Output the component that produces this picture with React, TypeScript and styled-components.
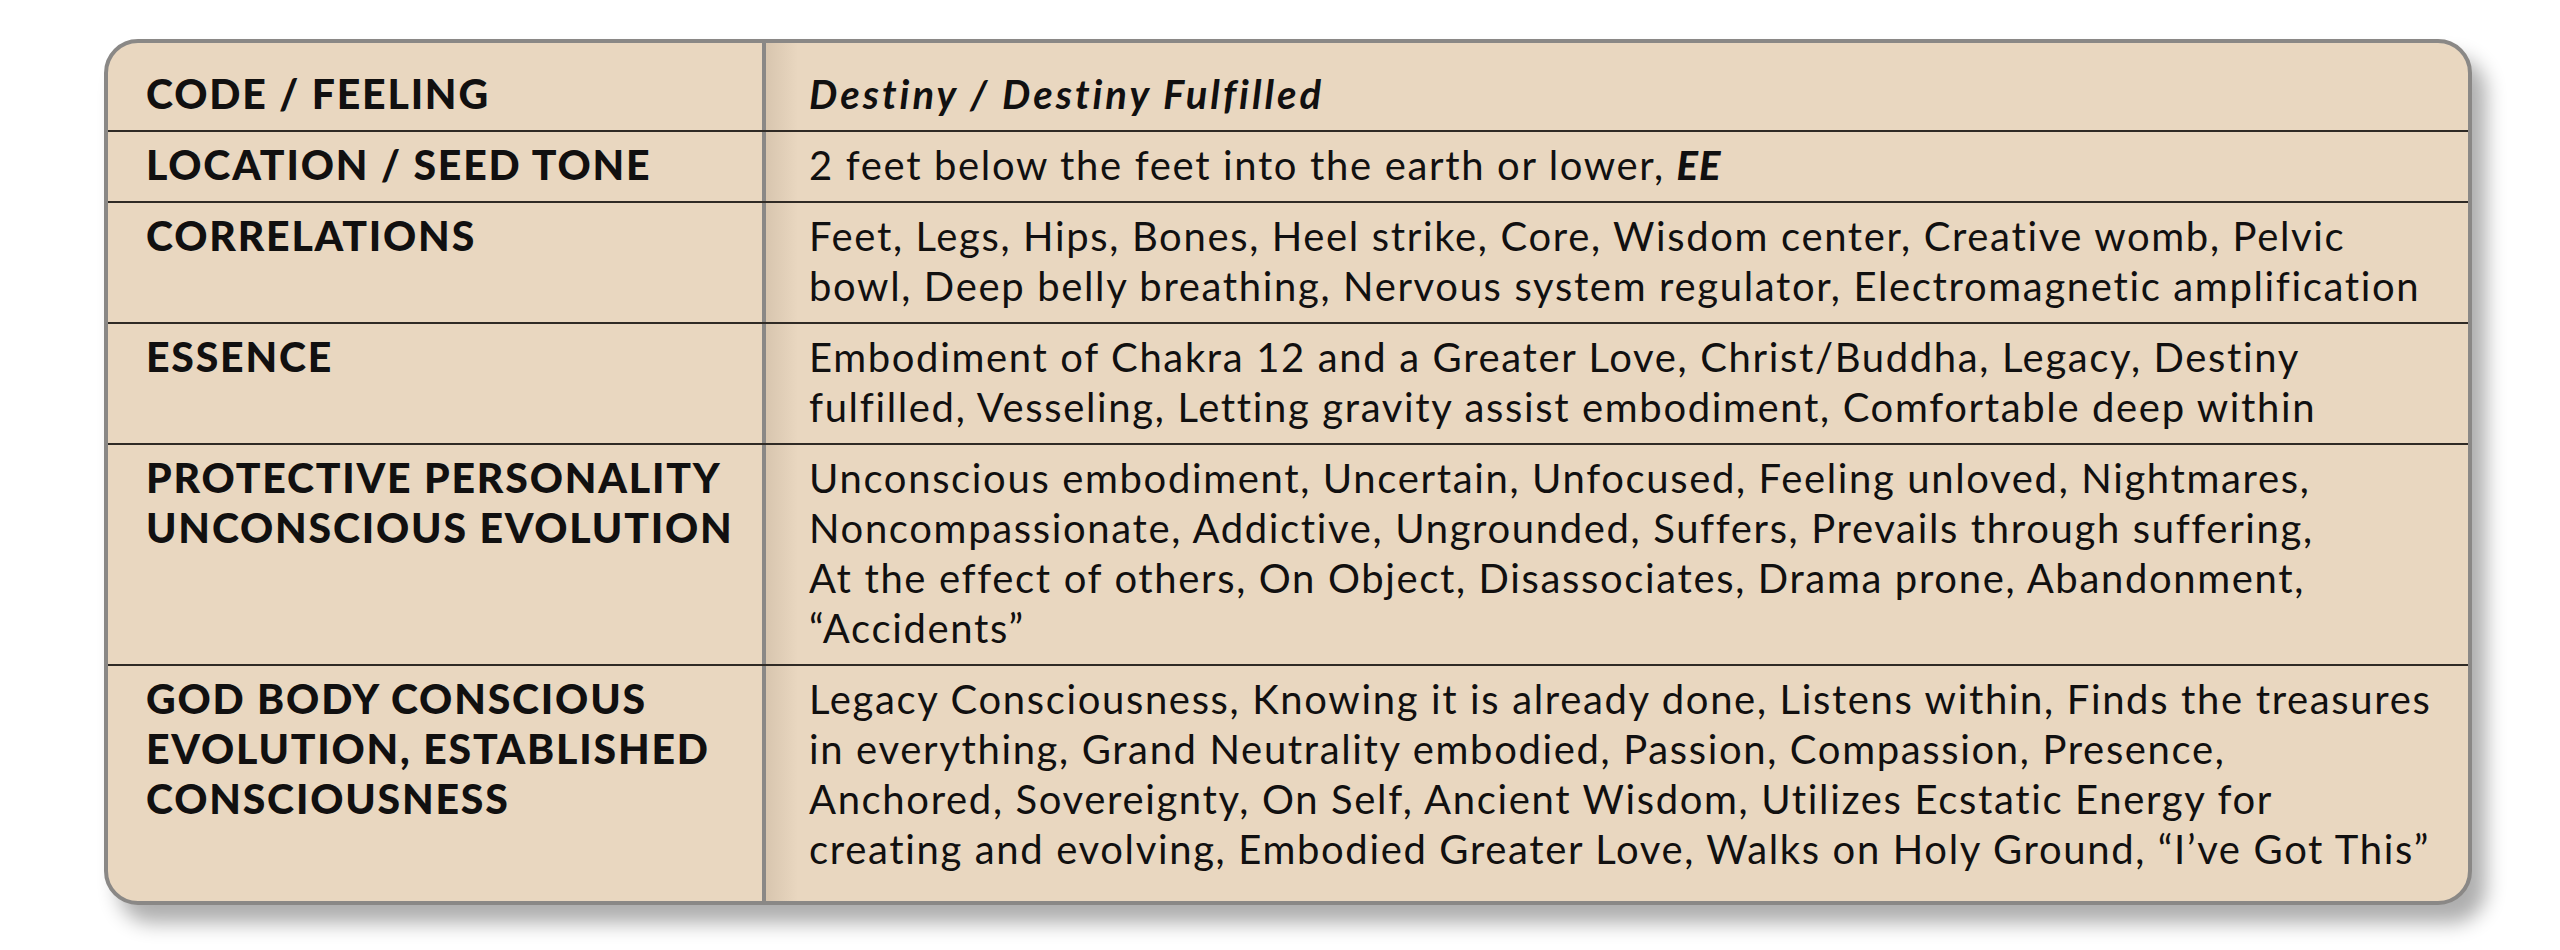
import React from 'react';
import styled, { createGlobalStyle } from 'styled-components';

const Colors = {
  paper: '#E9D7C0',
  frame: '#8A8886',
  rule: '#2F2A25',
  ink: '#111010',
};

const GlobalStyle = createGlobalStyle`
  * { margin: 0; padding: 0; box-sizing: border-box; }
  html, body { background: #FFFFFF; }
  body {
    font-family: Lato, 'Noto Sans', sans-serif;
    color: ${Colors.ink};
    -webkit-font-smoothing: antialiased;
  }
`;

const Page = styled.div`
  width: 2560px;
  height: 950px;
  padding: 39px 0 0 104px;
`;

const Card = styled.div`
  width: 2368px;
  background: ${Colors.paper};
  border: 4px solid ${Colors.frame};
  border-radius: 34px;
  overflow: hidden;
  box-shadow: 14px 18px 20px rgba(0, 0, 0, 0.32);
`;

const Row = styled.div<{ $first?: boolean }>`
  display: grid;
  grid-template-columns: 654px 1fr;
  border-top: ${p => (p.$first ? 'none' : `2px solid ${Colors.rule}`)};
`;

const Cell = styled.div<{ $top: number; $bottom: number }>`
  padding: ${p => p.$top}px 20px ${p => p.$bottom}px 38px;
  font-size: 40px;
  line-height: 50px;
  white-space: nowrap;
`;

const Label = styled(Cell)`
  font-size: 41px;
  font-weight: 900;
  letter-spacing: 1.8px;
`;

const Value = styled(Cell)`
  padding-left: 43px;
  font-weight: 400;
  letter-spacing: 1.65px;
  border-left: 4px solid ${Colors.frame};
  background: linear-gradient(to right, rgba(90, 70, 50, 0.12), rgba(90, 70, 50, 0) 32px);
`;

const Title = styled.span`
  font-style: italic;
  font-weight: 700;
  letter-spacing: 3px;
`;

const Tone = styled.b`
  font-style: italic;
  font-weight: 900;
  letter-spacing: 1px;
`;

type Entry = { label: string[]; value: React.ReactNode[] };

const rows: Entry[] = [
  { label: ['CODE / FEELING'], value: [<Title>Destiny / Destiny Fulfilled</Title>] },
  {
    label: ['LOCATION / SEED TONE'],
    value: [<>2 feet below the feet into the earth or lower, <Tone>EE</Tone></>],
  },
  {
    label: ['CORRELATIONS'],
    value: [
      'Feet, Legs, Hips, Bones, Heel strike, Core, Wisdom center, Creative womb, Pelvic',
      'bowl, Deep belly breathing, Nervous system regulator, Electromagnetic amplification',
    ],
  },
  {
    label: ['ESSENCE'],
    value: [
      'Embodiment of Chakra 12 and a Greater Love, Christ/Buddha, Legacy, Destiny',
      'fulfilled, Vesseling, Letting gravity assist embodiment, Comfortable deep within',
    ],
  },
  {
    label: ['PROTECTIVE PERSONALITY', 'UNCONSCIOUS EVOLUTION'],
    value: [
      'Unconscious embodiment, Uncertain, Unfocused, Feeling unloved, Nightmares,',
      'Noncompassionate, Addictive, Ungrounded, Suffers, Prevails through suffering,',
      'At the effect of others, On Object, Disassociates, Drama prone, Abandonment,',
      '\u201CAccidents\u201D',
    ],
  },
  {
    label: ['GOD BODY CONSCIOUS', 'EVOLUTION, ESTABLISHED', 'CONSCIOUSNESS'],
    value: [
      'Legacy Consciousness, Knowing it is already done, Listens within, Finds the treasures',
      'in everything, Grand Neutrality embodied, Passion, Compassion, Presence,',
      'Anchored, Sovereignty, On Self, Ancient Wisdom, Utilizes Ecstatic Energy for',
      'creating and evolving, Embodied Greater Love, Walks on Holy Ground, \u201CI\u2019ve Got This\u201D',
    ],
  },
];

const lines = (items: React.ReactNode[]) =>
  items.map((item, i) => (
    <React.Fragment key={i}>
      {i > 0 && <br />}
      {item}
    </React.Fragment>
  ));

const App: React.FC = () => {
  return (
    <Page>
      <GlobalStyle />
      <Card>
        {rows.map((r, i) => {
          const first = i === 0;
          const last = i === rows.length - 1;
          const top = first ? 26 : 8;
          const bottom = first ? 11 : last ? 27 : 11;
          return (
            <Row key={i} $first={first}>
              <Label $top={top} $bottom={bottom}>{lines(r.label)}</Label>
              <Value $top={top} $bottom={bottom}>{lines(r.value)}</Value>
            </Row>
          );
        })}
      </Card>
    </Page>
  );
};

export default App;
